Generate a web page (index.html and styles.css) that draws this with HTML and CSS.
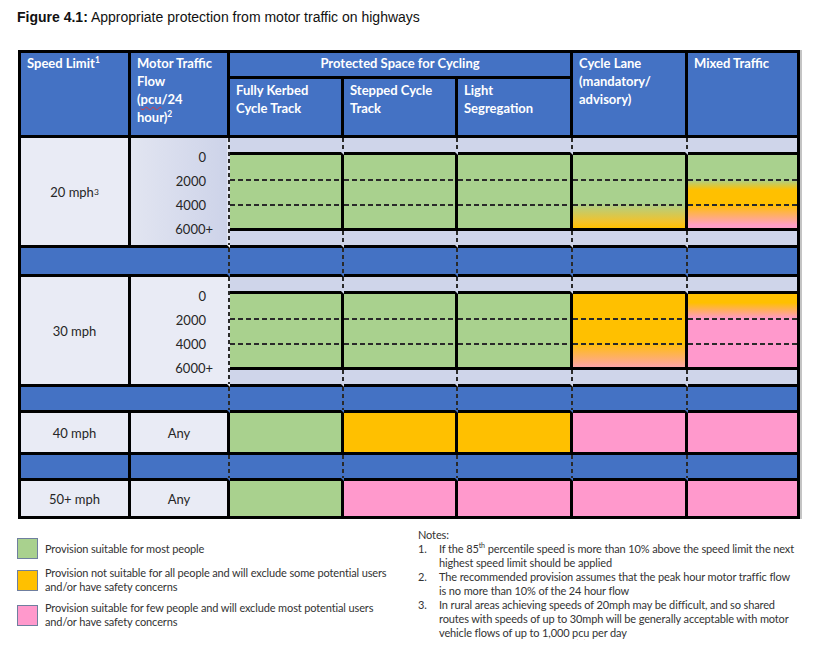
FILE: index.html
```html
<!DOCTYPE html>
<html lang="en">
<head>
    <meta charset="UTF-8">
    <meta name="viewport" content="width=device-width, initial-scale=1.0">
    <title>Figure 4.1</title>
    <link rel="stylesheet" href="styles.css">
</head>
<body>
    <p class="caption"><b>Figure 4.1:</b> Appropriate protection from motor traffic on highways</p>

    <div class="chart">
        <!-- header -->
        <div class="head rows2">Speed Limit<sup>1</sup></div>
        <div class="head rows2">Motor Traffic<br>Flow<br>(<span class="typo">pcu</span>/24<br>hour)<sup>2</sup></div>
        <div class="head cols3 center">Protected Space for Cycling</div>
        <div class="head rows2">Cycle Lane<br>(mandatory/<br>advisory)</div>
        <div class="head rows2">Mixed Traffic</div>
        <div class="head sub">Fully Kerbed<br>Cycle Track</div>
        <div class="head sub">Stepped Cycle<br>Track</div>
        <div class="head sub">Light<br>Segregation</div>

        <!-- 20 mph -->
        <div class="speed rows3">20 mph<sup>3</sup></div>
        <div class="flow rows3 shaded dash">
            <span>0</span><span>2000</span><span>4000</span><span class="plus">6000+</span>
        </div>
        <div class="strip dash"></div>
        <div class="strip dash"></div>
        <div class="strip dash"></div>
        <div class="strip dash"></div>
        <div class="strip"></div>
        <div class="box green first"></div>
        <div class="box green"></div>
        <div class="box green"></div>
        <div class="box fade-orange"></div>
        <div class="box fade-mixed"></div>
        <div class="strip dash"></div>
        <div class="strip dash"></div>
        <div class="strip dash"></div>
        <div class="strip dash"></div>
        <div class="strip"></div>

        <div class="band cols2 dash"></div>
        <div class="band dash"></div>
        <div class="band dash"></div>
        <div class="band dash"></div>
        <div class="band dash"></div>
        <div class="band"></div>

        <!-- 30 mph -->
        <div class="speed rows3">30 mph</div>
        <div class="flow rows3 dash">
            <span>0</span><span>2000</span><span>4000</span><span class="plus">6000+</span>
        </div>
        <div class="strip dash"></div>
        <div class="strip dash"></div>
        <div class="strip dash"></div>
        <div class="strip dash"></div>
        <div class="strip"></div>
        <div class="box green first"></div>
        <div class="box green"></div>
        <div class="box green"></div>
        <div class="box fade-salmon"></div>
        <div class="box fade-pink"></div>
        <div class="strip dash"></div>
        <div class="strip dash"></div>
        <div class="strip dash"></div>
        <div class="strip dash"></div>
        <div class="strip"></div>

        <div class="band cols2 dash"></div>
        <div class="band dash"></div>
        <div class="band dash"></div>
        <div class="band dash"></div>
        <div class="band dash"></div>
        <div class="band"></div>

        <!-- 40 mph -->
        <div class="speed">40 mph</div>
        <div class="speed">Any</div>
        <div class="green"></div>
        <div class="orange"></div>
        <div class="orange"></div>
        <div class="pink"></div>
        <div class="pink"></div>

        <div class="band"></div>
        <div class="band dash"></div>
        <div class="band dash"></div>
        <div class="band dash"></div>
        <div class="band dash"></div>
        <div class="band dash"></div>
        <div class="band"></div>

        <!-- 50+ mph -->
        <div class="speed">50+ mph</div>
        <div class="speed">Any</div>
        <div class="green"></div>
        <div class="pink"></div>
        <div class="pink"></div>
        <div class="pink"></div>
        <div class="pink"></div>
    </div>

    <div class="key">
        <div class="legend">
            <div class="legend-item">
                <span class="swatch green"></span>
                <span>Provision suitable for most people</span>
            </div>
            <div class="legend-item">
                <span class="swatch orange"></span>
                <span>Provision not suitable for all people and will exclude some potential users<br>and/or have safety concerns</span>
            </div>
            <div class="legend-item">
                <span class="swatch pink"></span>
                <span>Provision suitable for few people and will exclude most potential users<br>and/or have safety concerns</span>
            </div>
        </div>

        <div class="notes">
            <div>Notes:</div>
            <div class="note">
                <span class="note-num">1.</span>
                <span>If the 85<sup>th</sup> percentile speed is more than 10% above the speed limit the next<br>highest speed limit should be applied</span>
            </div>
            <div class="note">
                <span class="note-num">2.</span>
                <span>The recommended provision assumes that the peak hour motor traffic flow<br>is no more than 10% of the 24 hour flow</span>
            </div>
            <div class="note">
                <span class="note-num">3.</span>
                <span>In rural areas achieving speeds of 20mph may be difficult, and so shared<br>routes with speeds of up to 30mph will be generally acceptable with motor<br>vehicle flows of up to 1,000 <span class="typo">pcu</span> per day</span>
            </div>
        </div>
    </div>
</body>
</html>
```

FILE: styles.css
```css
body {
    margin: 0;
    padding: 9px 17px 0;
    background: #fff;
    color: #262626;
    font-family: Lato, 'Noto Sans', sans-serif;
}
sup {
    font-size: 0.65em;
    line-height: 0;
    vertical-align: super;
}
.caption {
    margin: 0 0 25px;
    font-family: 'Liberation Sans', Arial, sans-serif;
    font-size: 14px;
    line-height: 16px;
    color: #111;
}
.typo {
    text-decoration: underline wavy #e03a3a;
    text-decoration-thickness: 1px;
    text-underline-offset: 2px;
}

/* chart grid */
.chart {
    display: grid;
    grid-template-columns: 110px 99px 114px 114px 115px 115px 112px;
    grid-template-rows: 26px 59px 17px 76px 17px 29px 17px 76px 17px 26px 42px 26px 38px;
    width: max-content;
    margin-left: 1px;
    border-left: 3px solid #000;
    border-top: 3px solid #000;
    box-shadow: 2px 0 0 #c4c4c4;
    font-size: 13px;
}
.chart > div {
    box-sizing: border-box;
    border-right: 3px solid #000;
    border-bottom: 3px solid #000;
}
.rows2 { grid-row: span 2; }
.rows3 { grid-row: span 3; }
.cols2 { grid-column: span 2; }
.cols3 { grid-column: span 3; }
.center { text-align: center; }

.head {
    background: #4472c4;
    color: #fff;
    font-weight: 700;
    line-height: 18px;
    padding: 1px 6px;
}
.head.sub {
    padding-top: 2px;
}

.speed {
    display: flex;
    align-items: center;
    justify-content: center;
    background: #e9ebf5;
}
.speed sup {
    vertical-align: 5px;
}
.flow {
    display: flex;
    flex-direction: column;
    align-items: flex-end;
    padding: 7px 21px 0 0;
    line-height: 24px;
    background: #e9ebf5;
}
.flow.shaded {
    background: linear-gradient(to right, #e2e5f1, #cdd3e9);
}
.plus {
    margin-right: -7px;
}

.strip { background: #cfd5ea; }
.band { background: #4472c4; }

/* dashed column divider instead of the solid one */
.dash {
    position: relative;
    border-right-color: transparent !important;
}
.dash::after {
    content: '';
    position: absolute;
    top: 0;
    bottom: 0;
    right: -3px;
    width: 2px;
    background: repeating-linear-gradient(to bottom, #2a2a2a 0 4px, transparent 4px 7px);
}

.box {
    background:
        linear-gradient(to right, #2a2a2a 5px, transparent 5px) 0 24px / 8px 2px repeat-x,
        linear-gradient(to right, #2a2a2a 5px, transparent 5px) 0 49px / 8px 2px repeat-x,
        var(--fill);
}
.box.first {
    margin-left: -3px;
    border-left: 3px solid #000;
}

.green { --fill: #a9d18e; background-color: #a9d18e; }
.orange { background: #ffc000; }
.pink { background: #ff99cc; }
.fade-orange { --fill: linear-gradient(#a9d18e 66%, #f4c229 92%, #ffc000); }
.fade-mixed { --fill: linear-gradient(#a9d18e 34%, #ffc000 48%, #ffc000 68%, #ff9fc6 96%); }
.fade-salmon { --fill: linear-gradient(#ffc000 66%, #fda5a6); }
.fade-pink { --fill: linear-gradient(#ffc000 12%, #ff99cc 34%); }

/* legend and notes */
.key {
    display: flex;
    margin-top: 9px;
    font-size: 11px;
    line-height: 14px;
    letter-spacing: -0.13px;
    color: #333;
}
.legend {
    width: 401px;
    flex: none;
    padding-top: 10px;
    display: flex;
    flex-direction: column;
    gap: 7px;
}
.legend-item {
    display: flex;
    align-items: center;
    gap: 7px;
}
.swatch {
    width: 21px;
    height: 21px;
    flex: none;
    box-sizing: border-box;
    border: 1px solid #6f7f9f;
}
.notes {
    flex: 1;
    white-space: nowrap;
}
.note {
    display: flex;
}
.note-num {
    width: 21px;
    flex: none;
}
```
